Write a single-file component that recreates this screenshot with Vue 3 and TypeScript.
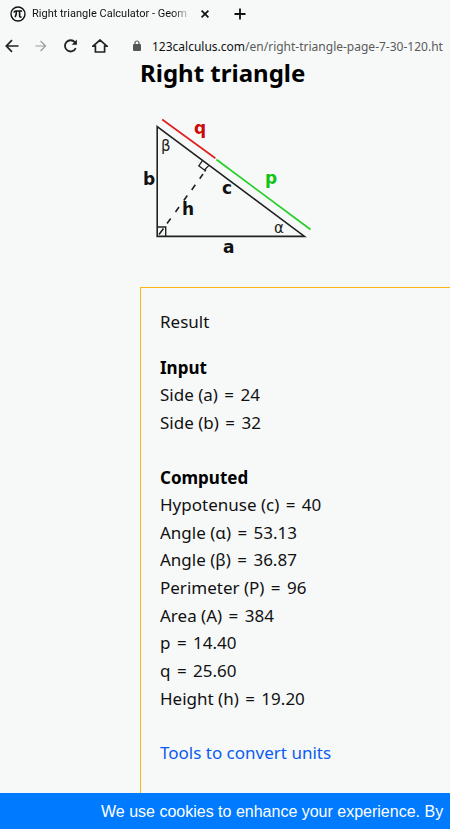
<script setup lang="ts">
interface Entry {
  label: string
  value: string
}

interface Section {
  title: string
  entries: Entry[]
}

const sections: Section[] = [
  {
    title: 'Input',
    entries: [
      { label: 'Side (a)', value: '24' },
      { label: 'Side (b)', value: '32' },
    ],
  },
  {
    title: 'Computed',
    entries: [
      { label: 'Hypotenuse (c)', value: '40' },
      { label: 'Angle (α)', value: '53.13' },
      { label: 'Angle (β)', value: '36.87' },
      { label: 'Perimeter (P)', value: '96' },
      { label: 'Area (A)', value: '384' },
      { label: 'p', value: '14.40' },
      { label: 'q', value: '25.60' },
      { label: 'Height (h)', value: '19.20' },
    ],
  },
]
</script>

<template>
  <div class="page">
    <header class="browser">
      <div class="tabs">
        <svg class="favicon" width="16" height="16" viewBox="0 0 16 16" aria-hidden="true">
          <circle cx="8" cy="8" r="7" fill="none" stroke="#111" stroke-width="1.4" />
          <path d="M3.9 6.6C4.3 5.2 5 5 6 5h6.1M6.4 5.2c0 2.6-.3 4.4-1.3 6M9.6 5.2v4.6c0 1.2.9 1.6 1.9.9" fill="none" stroke="#111" stroke-width="1.6" />
        </svg>
        <span class="tab-title">Right triangle Calculator - Geom</span>
        <button class="icon-button close" type="button" aria-label="Close tab">
          <svg width="10" height="10" viewBox="0 0 10 10"><path d="M1.6 1.6l6.8 6.8M8.4 1.6L1.6 8.4" stroke="#111" stroke-width="1.7" /></svg>
        </button>
        <button class="icon-button add" type="button" aria-label="New tab">
          <svg width="12" height="12" viewBox="0 0 12 12"><path d="M6 0.5v11M0.5 6h11" stroke="#111" stroke-width="1.8" /></svg>
        </button>
      </div>
      <div class="toolbar">
        <button class="icon-button" type="button" aria-label="Back">
          <svg width="14" height="14" viewBox="0 0 14 14"><path d="M13.5 7H1.5M7 1.2L1.3 7L7 12.8" fill="none" stroke="#222" stroke-width="1.7" /></svg>
        </button>
        <button class="icon-button" type="button" aria-label="Forward">
          <svg width="14" height="14" viewBox="0 0 14 14"><path d="M1.5 7H11.5M6.5 2L11.6 7L6.5 12" fill="none" stroke="#999" stroke-width="1.1" /></svg>
        </button>
        <button class="icon-button" type="button" aria-label="Reload">
          <svg width="14" height="14" viewBox="0 0 14 14"><path d="M12.7 9.1A5.6 5.6 0 1 1 11.9 3.3L13 4.8" fill="none" stroke="#222" stroke-width="1.8" /><path d="M13.9 0.6V5.8H8.7z" fill="#222" /></svg>
        </button>
        <button class="icon-button" type="button" aria-label="Home">
          <svg width="16" height="14" viewBox="0 0 16 14"><path d="M1 7.2L8 1L15 7.2H12.6V13H3.4V7.2Z" fill="none" stroke="#222" stroke-width="1.7" /></svg>
        </button>
        <svg class="lock" width="8" height="12" viewBox="0 0 8 12" aria-hidden="true">
          <rect y="4" width="8" height="7" rx="1" fill="#555" />
          <path d="M2 4.5V3a2 2 0 0 1 4 0v1.5" fill="none" stroke="#555" stroke-width="1.2" />
        </svg>
        <span class="address"><span class="host">123calculus.com</span>/en/right-triangle-page-7-30-120.ht</span>
      </div>
    </header>

    <main class="content">
      <h1>Right triangle</h1>
      <svg class="figure" width="180" height="150" viewBox="140 110 180 150" role="img" aria-label="Right triangle with sides a, b and c, height h and segments p and q">
        <g fill="none" stroke="#222" stroke-width="1.6">
          <path d="M157.2 126.5V236.4H304.5Z" />
          <path d="M159 234.5L163.5 228.5M167 223.5L170.7 218.5M175.5 212L179 207M183.8 200.5L187.3 195.5M191.7 190L195.3 184.8M199.7 178.8L203 174" stroke-width="1.6" />
          <path d="M204.5 171.5L206 169.5" stroke-width="1.4" />
          <path d="M157.5 227H165.7V236" stroke-width="1.4" />
          <path d="M202.3 160.8L198.8 165.8L204.3 170L208.8 165.6" stroke-width="1.3" />
        </g>
        <path d="M162.2 119.5L215.4 158.3" stroke="#e02020" stroke-width="1.7" />
        <path d="M216.4 159.5L310.5 229.5" stroke="#25cf25" stroke-width="1.7" />
        <g class="side">
          <text class="q" x="194" y="134">q</text>
          <text class="p" x="265" y="184">p</text>
          <text x="143" y="185">b</text>
          <text x="222" y="194">c</text>
          <text x="182" y="215">h</text>
          <text x="223" y="253">a</text>
        </g>
        <g class="angle">
          <text x="161" y="151">β</text>
          <text x="274" y="233">α</text>
        </g>
      </svg>

      <section class="result">
        <p class="lead">Result</p>
        <div v-for="section in sections" :key="section.title" class="group">
          <h2>{{ section.title }}</h2>
          <p v-for="entry in section.entries" :key="entry.label">{{ entry.label }} <span class="equals">=</span> {{ entry.value }}</p>
        </div>
        <a href="#units">Tools to convert units</a>
      </section>
    </main>

    <footer class="cookies">We use cookies to enhance your experience. By</footer>
  </div>
</template>

<style>
body {
  background: #f7f9f9;
}
</style>

<style scoped>
.page {
  display: flex;
  flex-direction: column;
  min-height: 100vh;
  overflow: hidden;
  color: #111;
  font-family: "Open Sans", "Noto Sans", sans-serif;
}

.tabs,
.toolbar {
  display: flex;
  align-items: center;
  white-space: nowrap;
}

.tabs {
  height: 28px;
  padding-left: 10px;
}

.tab-title {
  width: 160px;
  margin-left: 6px;
  overflow: hidden;
  font-family: Roboto, sans-serif;
  font-size: 11px;
  line-height: 16px;
  mask-image: linear-gradient(to right, #000 88%, transparent);
}

.icon-button {
  display: flex;
  flex: none;
  padding: 0;
  border: 0;
  background: none;
}

.close {
  margin-left: 8px;
}

.add {
  margin-left: 24px;
}

.toolbar {
  gap: 15px;
  height: 36px;
  padding-left: 5px;
}

.favicon,
.lock {
  flex: none;
}

.lock {
  margin-left: 10px;
}

.address {
  margin-left: -4px;
  color: #5a5a5a;
  font-family: "Noto Sans", sans-serif;
  font-size: 12px;
}

.host {
  color: #111;
}

.content {
  display: flex;
  flex: 1;
  flex-direction: column;
  padding-left: 140px;
}

h1,
h2,
p {
  margin: 0;
}

h1 {
  color: #000;
  font-family: "Noto Sans", sans-serif;
  font-size: 24px;
  font-weight: 700;
  line-height: 18px;
}

.figure {
  margin-top: 28px;
}

.side {
  font: 700 17px "DejaVu Sans", sans-serif;
  fill: #111;
}

.side .q {
  fill: #cc0808;
}

.side .p {
  fill: #10c410;
}

.angle {
  font: 15px "DejaVu Sans", sans-serif;
  fill: #222;
}

.result {
  flex: 1;
  margin-top: 27px;
  padding: 20px 20px 24px 19px;
  border: 1px solid #fbb615;
  border-width: 1px 0 0 1px;
  font-family: "Noto Sans", sans-serif;
  font-size: 17px;
  line-height: 1.625;
}

.lead {
  margin-bottom: 18px;
}

.group {
  margin-bottom: 27px;
}

.equals {
  margin: 0 2px;
}

h2 {
  color: #000;
  font-size: 17px;
  font-weight: 700;
}

a {
  color: #0a5cf0;
  text-decoration: none;
}

.cookies {
  padding: 1px 0 0 101px;
  background: #007bff;
  color: #fff;
  font-family: "Liberation Sans", sans-serif;
  font-size: 16px;
  line-height: 35px;
  white-space: nowrap;
}
</style>
